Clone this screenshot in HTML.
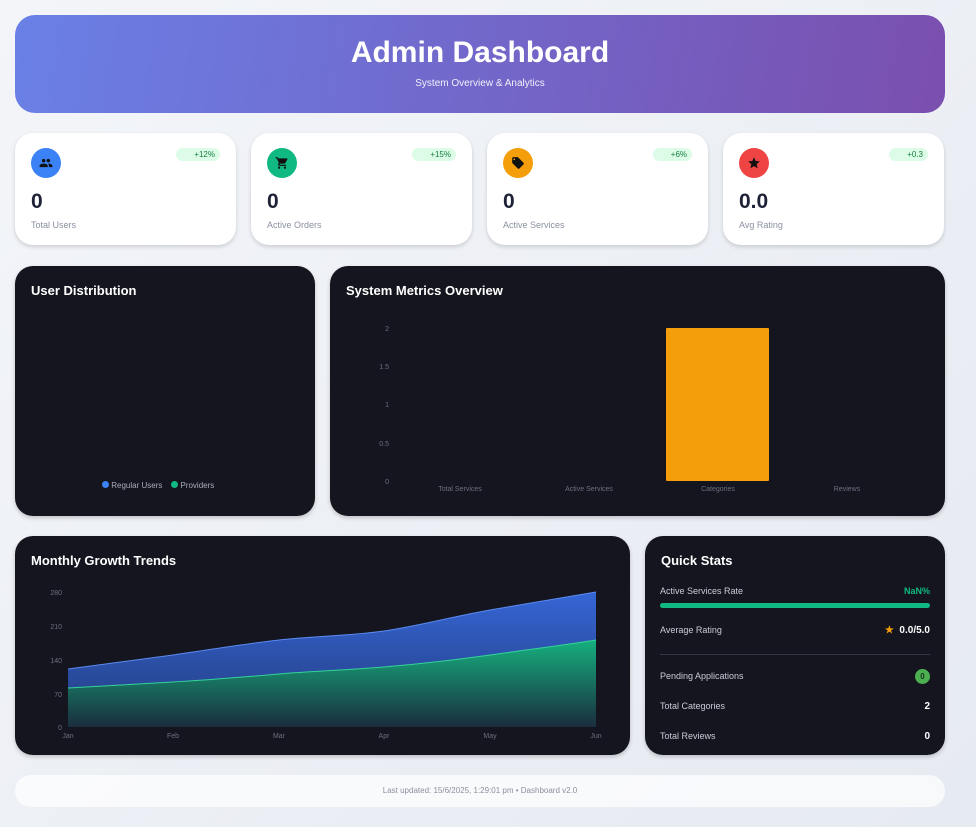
<!DOCTYPE html>
<html><head><meta charset="utf-8"><style>
*{box-sizing:border-box;margin:0;padding:0}
body{width:976px;height:827px;background:linear-gradient(135deg,#f3f5f9,#e6eaf1);font-family:"Liberation Sans",sans-serif;position:relative;overflow:hidden}
.abs{position:absolute}
.hdr{left:15px;top:15px;width:930px;height:98px;border-radius:20px;background:linear-gradient(100deg,#6a80e6,#7a4fae);color:#fff;text-align:center}
.hdr h1{font-size:30px;font-weight:bold;margin-top:21px}
.hdr p{font-size:10px;margin-top:8px;opacity:.9}
.card{top:133px;width:221px;height:112px;background:#fff;border-radius:18px;box-shadow:0 2px 4px rgba(0,0,0,.15)}
.ic{position:absolute;left:16px;top:15px;width:30px;height:30px;border-radius:50%}
.ic svg{position:absolute;left:8px;top:8px}
.badge{position:absolute;right:16px;top:15px;background:#dcfce7;color:#15803d;font-size:8px;border-radius:8px;padding:2px 5px 2px 18px}
.num{position:absolute;left:16px;top:57px;font-size:21px;font-weight:bold;color:#1e2236}
.lbl{position:absolute;left:16px;top:87px;font-size:9px;color:#8a90a0}
.dark{background:#14151e;border-radius:18px;color:#fff;box-shadow:0 2px 4px rgba(0,0,0,.2)}
.dark h2{position:absolute;left:16px;top:17px;font-size:13px;font-weight:bold}
.ax{font-size:7px;fill:#6b7080;font-family:"Liberation Sans",sans-serif}
.qs{position:absolute;left:15px;right:15px;font-size:9px;color:#c9ccd6}
.qs b{position:absolute;right:0;color:#fff;font-size:10px}
</style></head><body>
<div class="abs hdr"><h1>Admin Dashboard</h1><p>System Overview &amp; Analytics</p></div>

<div class="abs card" style="left:15px"><div class="ic" style="background:#3b82f6"><svg width="14" height="14" viewBox="0 0 24 24"><path fill="#111" d="M16 11a3 3 0 1 0 0-6 3 3 0 0 0 0 6zm-8 0a3 3 0 1 0 0-6 3 3 0 0 0 0 6zm0 2c-2.3 0-7 1.2-7 3.5V19h14v-2.5C15 14.2 10.3 13 8 13zm8 0c-.3 0-.6 0-1 .1 1.2.8 2 2 2 3.4V19h6v-2.5c0-2.3-4.7-3.5-7-3.5z"/></svg></div><div class="badge">+12%</div><div class="num">0</div><div class="lbl">Total Users</div></div>
<div class="abs card" style="left:251px"><div class="ic" style="background:#10b981"><svg width="14" height="14" viewBox="0 0 24 24"><path fill="#111" d="M7 18a2 2 0 1 0 0 4 2 2 0 0 0 0-4zm10 0a2 2 0 1 0 0 4 2 2 0 0 0 0-4zM1 2v2h2l3.6 7.6-1.4 2.4C5 15.3 6 17 7.5 17H19v-2H7.4l1.1-2h7.5c.8 0 1.4-.4 1.7-1l3.6-6.5A1 1 0 0 0 20.4 4H5.2L4.3 2H1z"/></svg></div><div class="badge">+15%</div><div class="num">0</div><div class="lbl">Active Orders</div></div>
<div class="abs card" style="left:487px"><div class="ic" style="background:#f59e0b"><svg width="14" height="14" viewBox="0 0 24 24"><path fill="#111" d="M21.4 11.6l-9-9C12 2.2 11.6 2 11 2H4a2 2 0 0 0-2 2v7c0 .6.2 1.1.6 1.4l9 9c.4.4.9.6 1.4.6s1-.2 1.4-.6l7-7c.4-.4.6-.9.6-1.4s-.2-1.1-.6-1.4zM5.5 7A1.5 1.5 0 1 1 5.5 4a1.5 1.5 0 0 1 0 3z"/></svg></div><div class="badge">+6%</div><div class="num">0</div><div class="lbl">Active Services</div></div>
<div class="abs card" style="left:723px"><div class="ic" style="background:#ef4444"><svg width="14" height="14" viewBox="0 0 24 24"><path fill="#111" d="M12 17.3l6.2 3.7-1.6-7L22 9.2l-7.2-.6L12 2 9.2 8.6 2 9.2 7.5 14l-1.7 7z"/></svg></div><div class="badge">+0.3</div><div class="num">0.0</div><div class="lbl">Avg Rating</div></div>

<div class="abs dark" style="left:15px;top:266px;width:300px;height:250px"><h2>User Distribution</h2>
<div class="abs" style="left:87px;top:215px;font-size:8px;color:#aab"><span style="display:inline-block;width:7px;height:7px;border-radius:50%;background:#3b82f6"></span> Regular Users &nbsp;&nbsp; <span style="display:inline-block;width:7px;height:7px;border-radius:50%;background:#10b981"></span> Providers</div></div>

<div class="abs dark" style="left:330px;top:266px;width:615px;height:250px"><h2>System Metrics Overview</h2>
<svg class="abs" style="left:0;top:0" width="615" height="250">
<text class="ax" x="59" y="65" text-anchor="end">2</text><text class="ax" x="59" y="103" text-anchor="end">1.5</text><text class="ax" x="59" y="141" text-anchor="end">1</text><text class="ax" x="59" y="180" text-anchor="end">0.5</text><text class="ax" x="59" y="218" text-anchor="end">0</text>
<rect x="336" y="62" width="103" height="153" fill="#f59e0b" rx="1"/>
<text class="ax" x="130" y="225" text-anchor="middle">Total Services</text><text class="ax" x="259" y="225" text-anchor="middle">Active Services</text><text class="ax" x="388" y="225" text-anchor="middle">Categories</text><text class="ax" x="517" y="225" text-anchor="middle">Reviews</text>
</svg></div>

<div class="abs dark" style="left:15px;top:536px;width:615px;height:219px"><h2>Monthly Growth Trends</h2>
<svg class="abs" style="left:0;top:0" width="615" height="219">
<defs><linearGradient id="gb" x1="0" y1="0" x2="0" y2="1"><stop offset="0" stop-color="#3566d6"/><stop offset="1" stop-color="#233a7a"/></linearGradient>
<linearGradient id="gg" x1="0" y1="0" x2="0" y2="1"><stop offset="0" stop-color="#16b07f"/><stop offset="1" stop-color="#1a2d3e"/></linearGradient></defs>
<path d="M53 133 C88 128,123 124,158 119 S228 108,264 104 S334 100,369 95 S440 80,475 74 S550 61,581 56 L581 191 L53 191Z" fill="url(#gb)"/>
<path d="M53 133 C88 128,123 124,158 119 S228 108,264 104 S334 100,369 95 S440 80,475 74 S550 61,581 56" fill="none" stroke="#5b8af0" stroke-width="1"/>
<path d="M53 152 C88 150,123 148,158 146 S228 141,264 138 S334 134,369 131 S440 124,475 119 S550 109,581 104 L581 191 L53 191Z" fill="url(#gg)"/>
<path d="M53 152 C88 150,123 148,158 146 S228 141,264 138 S334 134,369 131 S440 124,475 119 S550 109,581 104" fill="none" stroke="#34d399" stroke-width="1"/>
<text class="ax" x="47" y="59" text-anchor="end">280</text><text class="ax" x="47" y="93" text-anchor="end">210</text><text class="ax" x="47" y="127" text-anchor="end">140</text><text class="ax" x="47" y="161" text-anchor="end">70</text><text class="ax" x="47" y="194" text-anchor="end">0</text>
<text class="ax" x="53" y="202" text-anchor="middle">Jan</text><text class="ax" x="158" y="202" text-anchor="middle">Feb</text><text class="ax" x="264" y="202" text-anchor="middle">Mar</text><text class="ax" x="369" y="202" text-anchor="middle">Apr</text><text class="ax" x="475" y="202" text-anchor="middle">May</text><text class="ax" x="581" y="202" text-anchor="middle">Jun</text>
</svg></div>

<div class="abs dark" style="left:645px;top:536px;width:300px;height:219px"><h2>Quick Stats</h2>
<div class="qs" style="top:50px">Active Services Rate<b style="color:#10b981;font-size:9px">NaN%</b></div>
<div class="abs" style="left:15px;right:15px;top:67px;height:5px;border-radius:3px;background:#10b981"></div>
<div class="qs" style="top:89px">Average Rating<b><span style="color:#f59e0b">★</span>&nbsp; 0.0/5.0</b></div>
<div class="abs" style="left:15px;right:15px;top:118px;height:1px;background:#333644"></div>
<div class="qs" style="top:135px">Pending Applications<b style="top:-2px;width:15px;height:15px;border-radius:50%;background:#4caf50;color:#14351a;font-size:8px;text-align:center;line-height:15px">0</b></div>
<div class="qs" style="top:165px">Total Categories<b>2</b></div>
<div class="qs" style="top:195px">Total Reviews<b>0</b></div>
</div>

<div class="abs" style="left:15px;top:775px;width:930px;height:32px;background:rgba(255,255,255,.7);border-radius:16px;text-align:center;font-size:8px;color:#8a90a0;line-height:32px">Last updated: 15/6/2025, 1:29:01 pm • Dashboard v2.0</div>
</body></html>
